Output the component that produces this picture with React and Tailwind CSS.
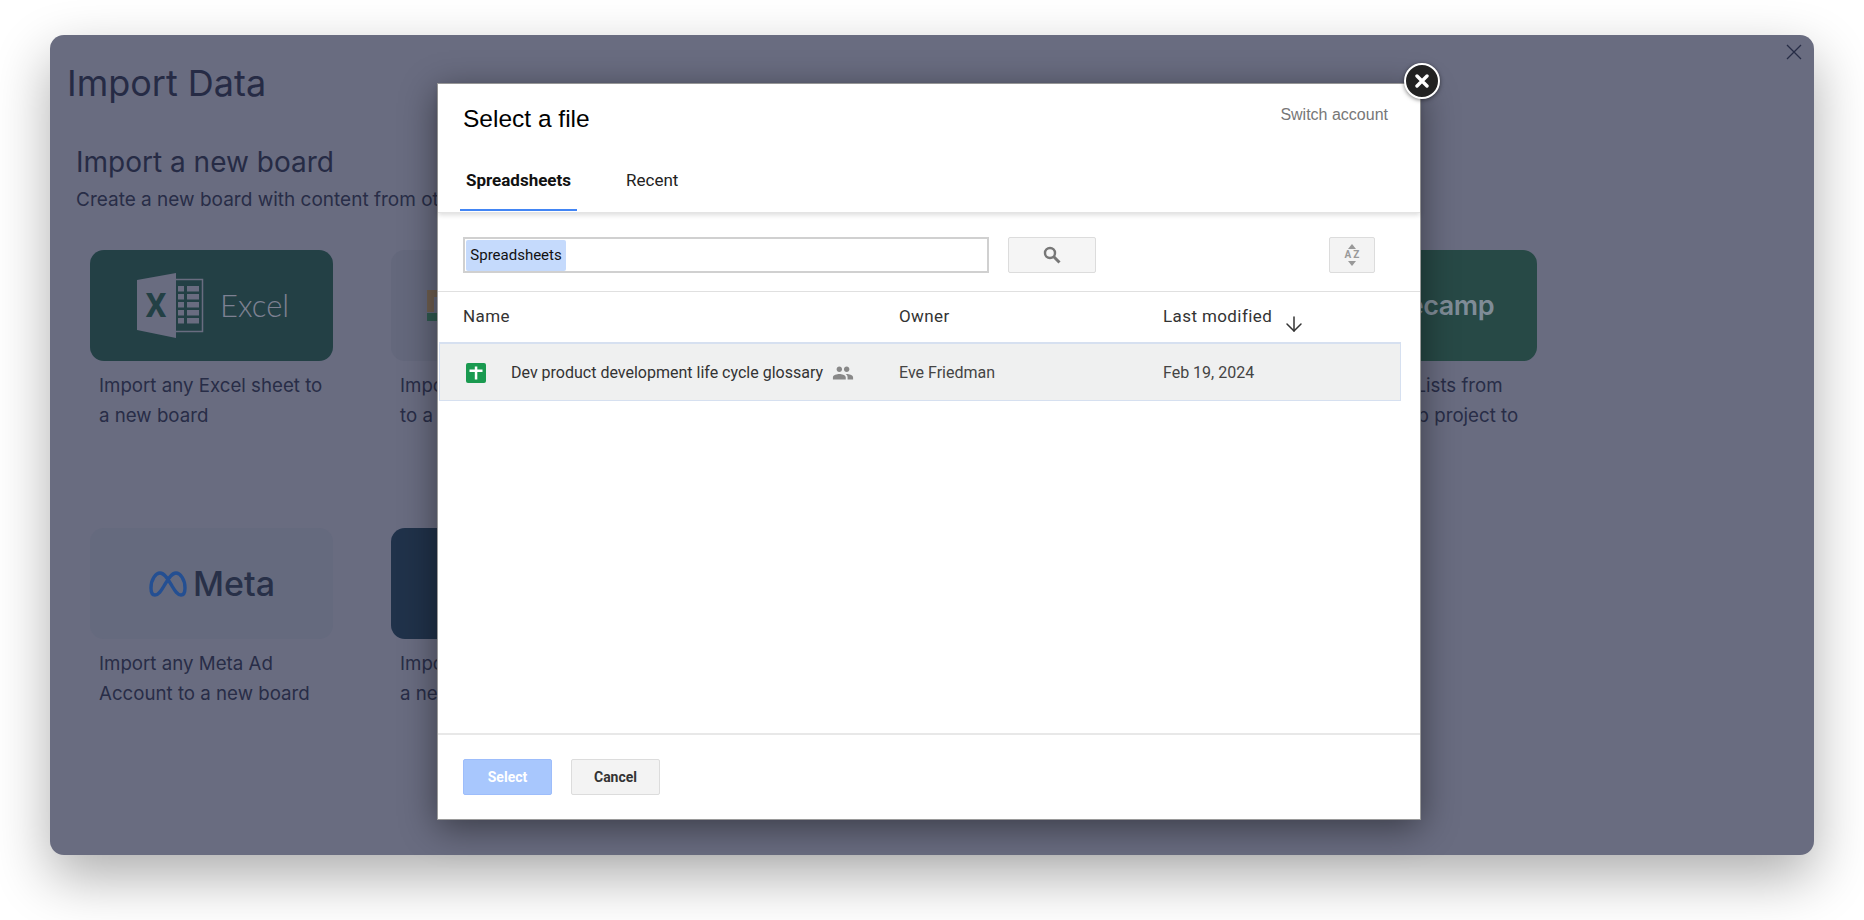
import { ArrowDown } from 'lucide-react'
import { MdPeople } from 'react-icons/md'

const cards = [
  { bg: 'bg-[#234045]', logo: <ExcelLogo />, lines: ['Import any Excel sheet to', 'a new board'] },
  { bg: 'bg-[#64687c]', logo: <SheetsPeek />, lines: ['Import', 'to a'] },
  null,
  null,
  { bg: 'bg-[#274946]', logo: <BasecampLogo />, lines: ['Import Todo Lists from', 'the Basecamp project to'] },
  { bg: 'bg-[#656a7e]', logo: <MetaLogo />, lines: ['Import any Meta Ad', 'Account to a new board'] },
  { bg: 'bg-[#20324a]', logo: null, lines: ['Import', 'a new'] },
]

function ExcelLogo() {
  return (
    <div className="flex items-center h-full pl-[47px]">
      <svg width="67" height="66" viewBox="0 0 67 66">
        <path d="M0 7 L39 0 V65 L0 57 Z" fill="#696c80" />
        <text x="19" y="44" textAnchor="middle" fontSize="33" fontWeight="700" fill="#234045" fontFamily="Roboto, sans-serif">X</text>
        <path d="M39 6.500 H65.500 V58.500 H39" fill="none" stroke="#696c80" strokeWidth="1.500" />
        {[13, 21, 29, 37, 45].map((y) => (
          <g key={y} fill="#696c80">
            <rect x="41" y={y} width="6" height="5.500" />
            <rect x="50" y={y} width="12" height="5.500" />
          </g>
        ))}
      </svg>
      <span className="ml-[16px] font-['Lato',sans-serif] font-light text-[31px] leading-none text-[#7d8192]">Excel</span>
    </div>
  )
}

function SheetsPeek() {
  return (
    <div className="flex items-center h-full pl-[36px]">
      <svg width="12" height="31" viewBox="0 0 12 31">
        <path d="M0 0 H12 V7 H7 V22 H0 Z" fill="#6f5f50" />
        <rect x="0" y="23" width="12" height="8" fill="#2f5a50" />
      </svg>
    </div>
  )
}

function BasecampLogo() {
  return (
    <div className="flex items-center justify-end h-full pr-[43px]">
      <span className="font-['Inter',sans-serif] font-semibold text-[27px] tracking-[-0.5px] leading-none text-[#7f8c97]">Basecamp</span>
    </div>
  )
}

function MetaLogo() {
  return (
    <div className="flex items-center h-full pl-[59px]">
      <svg width="38" height="26" viewBox="0 0 38 26" fill="none">
        <path
          d="M2 17 C2 8 7 2 11 2 C16 2 20 10 23 15 C26 20 28.500 24 32 24 C35 24 36 21 36 17 C36 8 31 2 27 2 C22 2 18 10 15 15 C12 20 9.500 24 6 24 C3 24 2 21 2 17 Z"
          stroke="#244f92"
          strokeWidth="3.400"
        />
      </svg>
      <span className="ml-[6px] font-['Inter',sans-serif] font-medium text-[34px] leading-none text-[#283048]">Meta</span>
    </div>
  )
}

function BoardCard({ card }) {
  return (
    <div>
      <div className={`${card.bg} h-[111px] rounded-[14px] overflow-hidden`}>{card.logo}</div>
      <p className="mt-[10px] pl-[9px] whitespace-nowrap text-[18.700px] leading-[29.500px] text-[#282d47]">
        {card.lines[0]}
        <br />
        {card.lines[1]}
      </p>
    </div>
  )
}

function SheetIcon() {
  return (
    <svg width="20" height="20" viewBox="0 0 20 20">
      <rect width="20" height="20" rx="2" fill="#1a9a50" />
      <rect x="3.500" y="6.500" width="13" height="2.500" fill="#fff" />
      <rect x="8.800" y="3.500" width="2.500" height="13" fill="#fff" />
    </svg>
  )
}

function FilePicker() {
  return (
    <div className="absolute left-[387px] top-[48px] w-[984px] h-[737px] bg-white border border-[#9a9a9a] shadow-[0_8px_34px_rgba(0,0,0,0.45)] flex flex-col font-['Roboto',sans-serif]">
      <button className="absolute -top-[21px] -right-[20px] w-[36px] h-[36px] rounded-full bg-[#222] border-2 border-white shadow-[0_1px_4px_rgba(0,0,0,0.5)] flex items-center justify-center">
        <svg width="14" height="14" viewBox="0 0 14 14">
          <path d="M2 2 L12 12 M12 2 L2 12" stroke="#fff" strokeWidth="3.400" strokeLinecap="round" />
        </svg>
      </button>

      <div className="h-[129px] shrink-0 shadow-[0_2px_5px_rgba(0,0,0,0.14)] border-b border-[#e4e4e4]">
        <div className="flex justify-between pl-[25px] pr-[32px] pt-[20px]">
          <h2 className="font-['Liberation_Sans',sans-serif] text-[24.500px] leading-[30px] text-black">Select a file</h2>
          <span className="font-['Liberation_Sans',sans-serif] text-[16px] leading-[22px] text-[#777]">Switch account</span>
        </div>
        <div className="flex mt-[29px] pl-[22px] text-[17px] leading-[20px]">
          <div className="w-[117px] h-[48px] pt-[7px] text-center font-bold text-[#111] border-b-2 border-[#4285f4]">Spreadsheets</div>
          <div className="ml-[49px] pt-[7px] text-[#222]">Recent</div>
        </div>
      </div>

      <div className="h-[79px] shrink-0 border-b border-[#e0e0e0] flex items-start pt-[24px] pl-[25px]">
        <div className="w-[526px] h-[36px] border-2 border-[#d0d0d0] flex items-center pl-[1px]">
          <span className="bg-[#c5dafc] rounded-[2px] h-[31px] w-[100px] flex items-center justify-center text-[15px] text-[#111]">Spreadsheets</span>
        </div>
        <button className="ml-[19px] w-[88px] h-[36px] bg-[#f5f5f5] border border-[#dcdcdc] rounded-[2px] flex items-center justify-center">
          <svg width="18" height="18" viewBox="0 0 18 18" fill="none" stroke="#777">
            <circle cx="7" cy="7" r="5" strokeWidth="2.400" />
            <path d="M10.800 10.800 L16.500 16.500" strokeWidth="3" />
          </svg>
        </button>
        <button className="ml-[233px] w-[46px] h-[36px] bg-[#f3f3f3] border border-[#dcdcdc] rounded-[2px] flex flex-col items-center justify-center gap-[1px]">
          <svg width="8" height="5" viewBox="0 0 8 5"><path d="M4 0 L8 5 H0 Z" fill="#999" /></svg>
          <span className="pl-[2px] text-[10px] leading-[10px] font-bold tracking-[2px] text-[#999]">AZ</span>
          <svg width="8" height="5" viewBox="0 0 8 5"><path d="M0 0 H8 L4 5 Z" fill="#999" /></svg>
        </button>
      </div>

      <div className="h-[50px] shrink-0 grid grid-cols-[436px_264px_1fr] items-center pl-[25px] text-[17px] tracking-[0.4px] text-[#333]">
        <span>Name</span>
        <span>Owner</span>
        <div className="flex items-center">
          <span>Last modified</span>
          <ArrowDown size={24} strokeWidth={1.500} className="ml-[10px] mt-[14px]" />
        </div>
      </div>

      <div className="h-[59px] shrink-0 ml-[1px] mr-[19px] pt-[2px] bg-[#eff0f0] border border-[#d6e0f0] border-t-2 grid grid-cols-[436px_264px_1fr] items-center pl-[23px] text-[16px] text-[#444]">
        <div className="flex items-center pl-[3px]">
          <SheetIcon />
          <span className="ml-[25px] text-[#333]">Dev product development life cycle glossary</span>
          <MdPeople size={22} className="ml-[9px] text-[#888]" />
        </div>
        <span>Eve Friedman</span>
        <span>Feb 19, 2024</span>
      </div>

      <div className="flex-1" />

      <div className="h-[86px] shrink-0 border-t-2 border-[#e8e8e8] flex items-start pt-[24px] pl-[25px] gap-[19px] text-[14px] font-bold">
        <button className="w-[89px] h-[36px] bg-[#a8c7fd] border border-[#9dbdfb] rounded-[2px] text-white">Select</button>
        <button className="w-[89px] h-[36px] bg-[#f3f3f3] border border-[#dcdcdc] rounded-[2px] text-[#333]">Cancel</button>
      </div>
    </div>
  )
}

export default function App() {
  return (
    <div className="h-[920px] bg-white overflow-hidden pt-[35px] px-[50px] font-['Inter',sans-serif]">
      <div className="relative h-[820px] rounded-[14px] bg-[#696c80] shadow-[0_22px_55px_rgba(0,0,0,0.32)]">
        <button className="absolute top-[9px] right-[12px] text-[#262c45]">
          <svg width="16" height="16" viewBox="0 0 16 16">
            <path d="M1 1 L15 15 M15 1 L1 15" stroke="currentColor" strokeWidth="1.300" />
          </svg>
        </button>

        <div className="pt-[23px] pl-[17px]">
          <h1 className="text-[36px] leading-[50px] text-[#262b45]">Import Data</h1>
        </div>
        <div className="pt-[36px] pl-[26px]">
          <h2 className="text-[28px] leading-[36px] text-[#262b45]">Import a new board</h2>
          <p className="mt-[7px] whitespace-nowrap text-[19px] leading-[26px] text-[#282d47]">Create a new board with content from ot</p>
        </div>

        <div className="mt-[37px] pl-[40px] grid grid-cols-[repeat(5,243px)] gap-x-[58px] auto-rows-[278px]">
          {cards.map((card, i) => (card ? <BoardCard key={i} card={card} /> : <div key={i} />))}
        </div>

        <FilePicker />
      </div>
    </div>
  )
}
